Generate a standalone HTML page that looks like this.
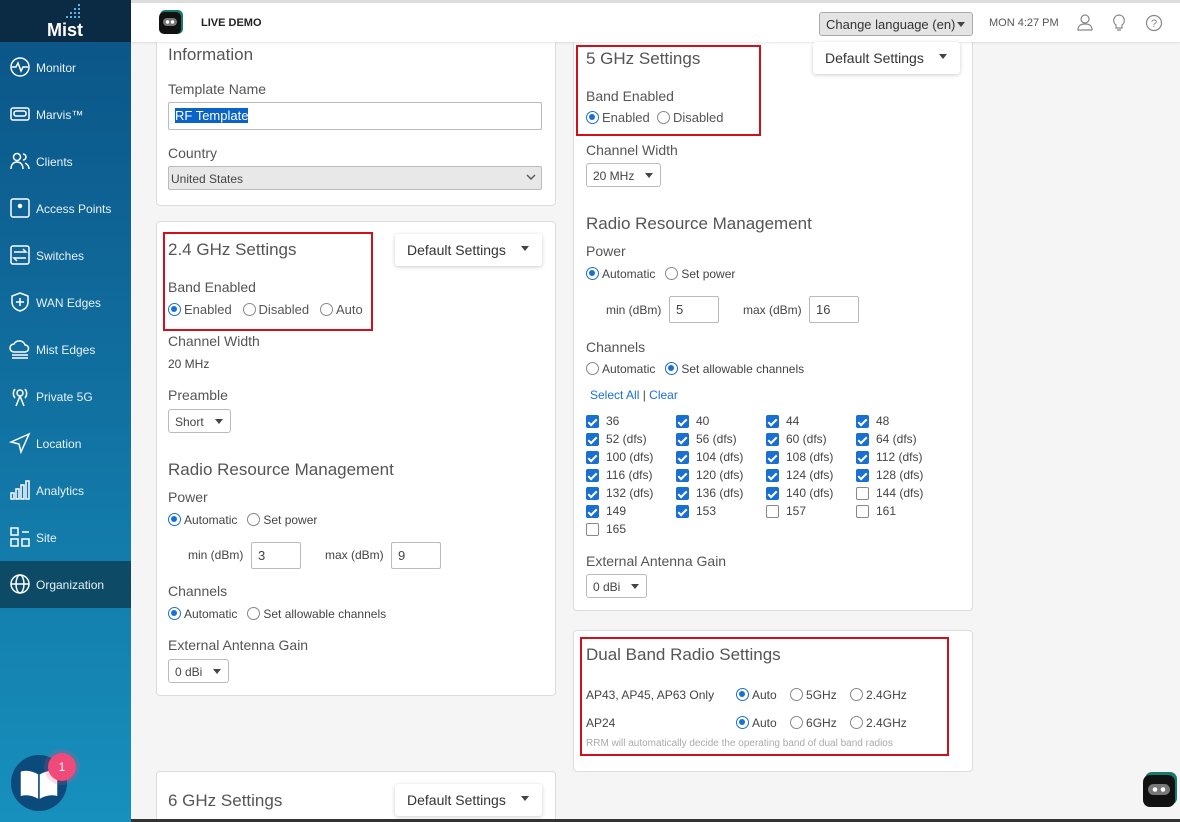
<!DOCTYPE html>
<html style="width:1180px;height:822px;overflow:hidden"><head><meta charset="utf-8"><style>
*{box-sizing:border-box;margin:0;padding:0}
body{width:1180px;height:822px;overflow:hidden;background:#f5f5f5;font-family:"Liberation Sans",sans-serif;color:#444;position:relative}
.a{position:absolute;white-space:nowrap}
.sb{position:absolute;left:0;top:0;width:131px;height:822px;background:linear-gradient(#0b5386,#1790bd)}
.logo{position:absolute;left:0;top:0;width:131px;height:42px;background:#0b2b44}
.nav{position:absolute;left:0;width:131px;height:47px;color:#e8f2f8;font-size:12px}
.nav span{position:absolute;left:36px;top:17px}
.nav svg{position:absolute;left:9px;top:12px}
.hdr{position:absolute;left:131px;top:0;width:1049px;height:42px;background:#fff;border-top:3px solid #ddd;box-shadow:0 1px 2px rgba(0,0,0,.1)}
.card{position:absolute;background:#fff;border:1px solid #ddd;border-radius:4px}
.h{font-size:17px;color:#555}
.l{font-size:14px;color:#555}
.s{font-size:12px;color:#444}
.red{position:absolute;border:2px solid #d0111b}
.r{display:inline-block;width:13px;height:13px;border:1.5px solid #888;border-radius:50%;vertical-align:-2px;margin-right:3px;position:relative;background:#fff}
.r.on{border-color:#1a6fd3}
.r.on:after{content:"";position:absolute;left:2px;top:2px;width:6px;height:6px;border-radius:50%;background:#1a6fd3}
.c{position:absolute;width:13px;height:13px;border-radius:2px;background:#1a6fd3}
.c:after{content:"";position:absolute;left:4px;top:1.5px;width:3px;height:7px;border:solid #fff;border-width:0 2px 2px 0;transform:rotate(45deg)}
.c.off{background:#fff;border:1.5px solid #888}
.c.off:after{display:none}
.sel{position:absolute;border:1px solid #bbb;border-radius:3px;background:#fff;font-size:12px;color:#444;padding:5px 6px}
.sel:after{content:"";position:absolute;right:7px;top:9px;border:4px solid transparent;border-top:5px solid #444}
.inp{position:absolute;border:1px solid #bbb;border-radius:2px;background:#fff;font-size:13px;padding:5px 6px;height:28px}
.dd{position:absolute;width:147px;height:32px;background:#fff;border-radius:3px;box-shadow:0 1px 4px rgba(0,0,0,.2);font-size:14px;color:#333;padding:8px 12px}
.dd:after{content:"";position:absolute;right:13px;top:12px;border:4px solid transparent;border-top:5px solid #444}
</style></head><body>
<div class="sb"></div>
<div class="logo">
<div class="a" style="left:47px;top:20px;color:#fff;font-weight:bold;font-size:18px">Mist</div>
<svg class="a" style="left:64px;top:4px" width="20" height="18"><g fill="#5bb3e0"><rect x="14" y="0" width="2" height="2"/><rect x="14" y="4" width="2" height="2"/><rect x="10" y="4" width="2" height="2"/><rect x="14" y="8" width="2" height="2"/><rect x="10" y="8" width="2" height="2"/><rect x="6" y="8" width="2" height="2"/><rect x="14" y="12" width="2" height="2"/><rect x="10" y="12" width="2" height="2"/><rect x="6" y="12" width="2" height="2"/><rect x="2" y="12" width="2" height="2"/></g></svg>
</div>
<div class="nav" style="top:44px"><svg width="22" height="22" fill="none" stroke="#fff" stroke-width="1.5"><circle cx="11" cy="11" r="9"/><path d="M3 11h4l2-4 3 8 2-4h5"/></svg><span>Monitor</span></div>
<div class="nav" style="top:91px"><svg width="22" height="22" fill="none" stroke="#fff" stroke-width="1.5"><rect x="2" y="5" width="18" height="12" rx="2"/><rect x="5" y="8" width="12" height="5" rx="2"/></svg><span>Marvis™</span></div>
<div class="nav" style="top:138px"><svg width="22" height="22" fill="none" stroke="#fff" stroke-width="1.5"><circle cx="8" cy="7" r="3.5"/><path d="M2 19c0-5 3-7 6-7s6 2 6 7M14 4a3 3 0 010 6M16 13c2 1 4 3 4 6"/></svg><span>Clients</span></div>
<div class="nav" style="top:185px"><svg width="22" height="22" fill="none" stroke="#fff" stroke-width="1.5"><rect x="2" y="2" width="18" height="18" rx="2"/><circle cx="11" cy="9" r="1.5" fill="#fff"/></svg><span>Access Points</span></div>
<div class="nav" style="top:232px"><svg width="22" height="22" fill="none" stroke="#fff" stroke-width="1.5"><rect x="2" y="2" width="18" height="18" rx="2"/><path d="M5 8h12l-3-3M17 14H5l3 3"/></svg><span>Switches</span></div>
<div class="nav" style="top:279px"><svg width="22" height="22" fill="none" stroke="#fff" stroke-width="1.5"><path d="M11 2l8 3v6c0 5-4 8-8 9-4-1-8-4-8-9V5z"/><path d="M11 7v8M7 11h8"/></svg><span>WAN Edges</span></div>
<div class="nav" style="top:326px"><svg width="22" height="22" fill="none" stroke="#fff" stroke-width="1.5"><path d="M5 14a4 4 0 010-8 6 6 0 0111 1 3.5 3.5 0 010 7z"/><path d="M3 17h16M3 20h16"/></svg><span>Mist Edges</span></div>
<div class="nav" style="top:373px"><svg width="22" height="22" fill="none" stroke="#fff" stroke-width="1.5"><circle cx="11" cy="8" r="3"/><path d="M6 4a7 7 0 000 9M16 4a7 7 0 010 9M11 11l-4 10M11 11l4 10"/></svg><span>Private 5G</span></div>
<div class="nav" style="top:420px"><svg width="22" height="22" fill="none" stroke="#fff" stroke-width="1.5"><path d="M20 2L2 10l8 2 2 8z"/></svg><span>Location</span></div>
<div class="nav" style="top:467px"><svg width="22" height="22" fill="none" stroke="#fff" stroke-width="1.5"><rect x="2" y="14" width="3" height="6"/><rect x="7" y="10" width="3" height="10"/><rect x="12" y="6" width="3" height="14"/><rect x="17" y="2" width="3" height="18"/></svg><span>Analytics</span></div>
<div class="nav" style="top:514px"><svg width="22" height="22" fill="none" stroke="#fff" stroke-width="1.5"><rect x="2" y="2" width="7" height="7"/><rect x="2" y="13" width="7" height="7"/><rect x="13" y="13" width="7" height="7"/><path d="M13 6h7"/></svg><span>Site</span></div>
<div class="nav" style="top:561px;background:#0c4a66"><svg width="22" height="22" fill="none" stroke="#fff" stroke-width="1.5"><circle cx="11" cy="11" r="9"/><ellipse cx="11" cy="11" rx="4" ry="9"/><path d="M2 11h18"/></svg><span>Organization</span></div>
<div class="a" style="left:11px;top:755px;width:56px;height:56px;border-radius:50%;background:#0b4a7a"></div>
<svg class="a" style="left:17px;top:766px" width="44" height="36" fill="#fff" stroke="#0b4a7a" stroke-width="1.5"><path d="M3 5c6-2 12-1 19 3v26c-7-4-13-5-19-3z"/><path d="M41 5c-6-2-12-1-19 3v26c7-4 13-5 19-3z"/></svg>
<div class="a" style="left:48px;top:753px;width:28px;height:28px;border-radius:50%;background:#ef4a7a;color:#fff;font-size:12px;text-align:center;line-height:28px;box-shadow:0 0 0 4px rgba(239,74,122,.2)">1</div>

<div class="card" style="left:156px;top:20px;width:400px;height:186px"></div>
<div class="card" style="left:156px;top:221px;width:400px;height:475px"></div>
<div class="card" style="left:156px;top:771px;width:400px;height:60px"></div>
<div class="card" style="left:573px;top:20px;width:400px;height:591px"></div>
<div class="card" style="left:573px;top:630px;width:400px;height:142px"></div>

<div class="hdr">
<svg class="a" style="left:28px;top:7px" width="24" height="24"><rect x="1" y="0" width="23" height="24" rx="5" fill="#137a6d"/><rect x="0" y="2" width="22" height="22" rx="5" fill="#111"/><rect x="4" y="8" width="14" height="8" rx="4" fill="#777"/><circle cx="8.5" cy="12" r="1.7" fill="#fff"/><circle cx="13.5" cy="12" r="1.7" fill="#fff"/></svg>
<div class="a" style="left:70px;top:14px;font-size:11px;font-weight:bold;color:#222">LIVE DEMO</div>
<div class="a" style="left:688px;top:9px;width:154px;height:24px;background:#e4e4e4;border:1px solid #aaa;border-radius:3px;font-size:13px;color:#333;padding:4px 6px">Change language (en)</div>
<div class="a" style="left:826px;top:19px;border:4px solid transparent;border-top:5px solid #444"></div>
<div class="a" style="left:858px;top:14px;font-size:11px;color:#555">MON 4:27 PM</div>
<svg class="a" style="left:946px;top:11px" width="16" height="18" fill="none" stroke="#888" stroke-width="1.2"><circle cx="8" cy="5" r="4"/><path d="M1 16c0-5 3-6 7-6s7 1 7 6z"/></svg>
<svg class="a" style="left:981px;top:11px" width="14" height="18" fill="none" stroke="#888" stroke-width="1.2"><path d="M7 1a5.5 5.5 0 00-3 10v3h6v-3A5.5 5.5 0 007 1zM5 16h4"/></svg>
<svg class="a" style="left:1014px;top:11px" width="18" height="18" fill="none" stroke="#888" stroke-width="1.2"><circle cx="9" cy="9" r="7.5"/><text x="9" y="13" font-size="11" fill="#888" stroke="none" text-anchor="middle" font-family="Liberation Sans">?</text></svg>
</div>

<!-- Info -->
<div class="a h" style="left:168px;top:45px">Information</div>
<div class="a l" style="left:168px;top:81px">Template Name</div>
<div class="inp" style="left:168px;top:102px;width:374px"><span style="background:#0a64c8;color:#fff">RF Template</span></div>
<div class="a l" style="left:168px;top:145px">Country</div>
<div class="a" style="left:168px;top:166px;width:374px;height:24px;background:#e8e8e8;border:1px solid #bbb;border-radius:2px;font-size:12px;padding:5px 2px;color:#444">United States</div>
<svg class="a" style="left:526px;top:173px" width="10" height="8" fill="none" stroke="#555" stroke-width="1.4"><path d="M1 2l4 4 4-4"/></svg>

<!-- 2.4 -->
<div class="red" style="left:163px;top:232px;width:210px;height:99px"></div>
<div class="a h" style="left:168px;top:240px">2.4 GHz Settings</div>
<div class="dd" style="left:395px;top:234px">Default Settings</div>
<div class="a l" style="left:168px;top:279px">Band Enabled</div>
<div class="a l" style="left:168px;top:302px;font-size:13px"><span class="r on"></span>Enabled &nbsp;&nbsp;<span class="r"></span>Disabled &nbsp;&nbsp;<span class="r"></span>Auto</div>
<div class="a l" style="left:168px;top:333px">Channel Width</div>
<div class="a s" style="left:168px;top:357px">20 MHz</div>
<div class="a l" style="left:168px;top:387px">Preamble</div>
<div class="sel" style="left:168px;top:409px;width:63px;height:24px">Short</div>
<div class="a h" style="left:168px;top:460px">Radio Resource Management</div>
<div class="a l" style="left:168px;top:489px">Power</div>
<div class="a s" style="left:168px;top:513px"><span class="r on"></span>Automatic &nbsp;&nbsp;<span class="r"></span>Set power</div>
<div class="a s" style="left:188px;top:548px">min (dBm)</div>
<div class="inp" style="left:251px;top:542px;width:50px;height:27px">3</div>
<div class="a s" style="left:325px;top:548px">max (dBm)</div>
<div class="inp" style="left:391px;top:542px;width:50px;height:27px">9</div>
<div class="a l" style="left:168px;top:583px">Channels</div>
<div class="a s" style="left:168px;top:607px"><span class="r on"></span>Automatic &nbsp;&nbsp;<span class="r"></span>Set allowable channels</div>
<div class="a l" style="left:168px;top:637px">External Antenna Gain</div>
<div class="sel" style="left:168px;top:659px;width:61px;height:24px">0 dBi</div>

<!-- 6 GHz -->
<div class="a h" style="left:168px;top:791px">6 GHz Settings</div>
<div class="dd" style="left:395px;top:784px">Default Settings</div>

<!-- 5 GHz -->
<div class="red" style="left:576px;top:45px;width:185px;height:91px"></div>
<div class="a h" style="left:586px;top:49px">5 GHz Settings</div>
<div class="dd" style="left:813px;top:42px">Default Settings</div>
<div class="a l" style="left:586px;top:88px">Band Enabled</div>
<div class="a l" style="left:586px;top:110px;font-size:13px"><span class="r on"></span>Enabled &nbsp;<span class="r"></span>Disabled</div>
<div class="a l" style="left:586px;top:142px">Channel Width</div>
<div class="sel" style="left:586px;top:163px;width:75px;height:24px">20 MHz</div>
<div class="a h" style="left:586px;top:214px">Radio Resource Management</div>
<div class="a l" style="left:586px;top:243px">Power</div>
<div class="a s" style="left:586px;top:267px"><span class="r on"></span>Automatic &nbsp;&nbsp;<span class="r"></span>Set power</div>
<div class="a s" style="left:606px;top:303px">min (dBm)</div>
<div class="inp" style="left:669px;top:296px;width:50px;height:27px">5</div>
<div class="a s" style="left:743px;top:303px">max (dBm)</div>
<div class="inp" style="left:809px;top:296px;width:50px;height:27px">16</div>
<div class="a l" style="left:586px;top:339px">Channels</div>
<div class="a s" style="left:586px;top:362px"><span class="r"></span>Automatic &nbsp;&nbsp;<span class="r on"></span>Set allowable channels</div>
<div class="a s" style="left:590px;top:388px;color:#1a6fd3">Select All <span style="color:#444">|</span> Clear</div>
<div id="ch"></div>
<div class="a l" style="left:586px;top:553px">External Antenna Gain</div>
<div class="sel" style="left:586px;top:574px;width:61px;height:24px">0 dBi</div>

<!-- Dual -->
<div class="red" style="left:580px;top:637px;width:369px;height:119px"></div>
<div class="a h" style="left:586px;top:645px">Dual Band Radio Settings</div>
<div class="a s" style="left:586px;top:688px">AP43, AP45, AP63 Only</div>
<div class="a s" style="left:736px;top:688px"><span class="r on"></span>Auto &nbsp;&nbsp;&nbsp;<span class="r"></span>5GHz &nbsp;&nbsp;&nbsp;<span class="r"></span>2.4GHz</div>
<div class="a s" style="left:586px;top:716px">AP24</div>
<div class="a s" style="left:736px;top:716px"><span class="r on"></span>Auto &nbsp;&nbsp;&nbsp;<span class="r"></span>6GHz &nbsp;&nbsp;&nbsp;<span class="r"></span>2.4GHz</div>
<div class="a" style="left:586px;top:738px;font-size:10px;color:#aaa">RRM will automatically decide the operating band of dual band radios</div>

<svg class="a" style="left:1143px;top:772px" width="36" height="36"><rect x="2" y="0" width="32" height="33" rx="7" fill="#137a6d"/><rect x="0" y="3" width="32" height="32" rx="7" fill="#111"/><rect x="5" y="12" width="22" height="11" rx="5.5" fill="#777"/><circle cx="12" cy="17.5" r="2.3" fill="#fff"/><circle cx="20" cy="17.5" r="2.3" fill="#fff"/></svg>
<div class="a" style="left:131px;top:819px;width:1049px;height:3px;background:#333"></div>

<script>
var rows=[["36","40","44","48"],["52 (dfs)","56 (dfs)","60 (dfs)","64 (dfs)"],["100 (dfs)","104 (dfs)","108 (dfs)","112 (dfs)"],["116 (dfs)","120 (dfs)","124 (dfs)","128 (dfs)"],["132 (dfs)","136 (dfs)","140 (dfs)","144 (dfs)"],["149","153","157","161"],["165"]];
var off={"144 (dfs)":1,"157":1,"161":1,"165":1},h="";
rows.forEach(function(r,i){r.forEach(function(t,j){var x=586+j*90,y=415+i*18;h+='<div class="c'+(off[t]?' off':'')+'" style="left:'+x+'px;top:'+y+'px"></div><div class="a s" style="left:'+(x+20)+'px;top:'+(y-1)+'px">'+t+'</div>';});});
document.getElementById('ch').innerHTML=h;
</script>
</body></html>
